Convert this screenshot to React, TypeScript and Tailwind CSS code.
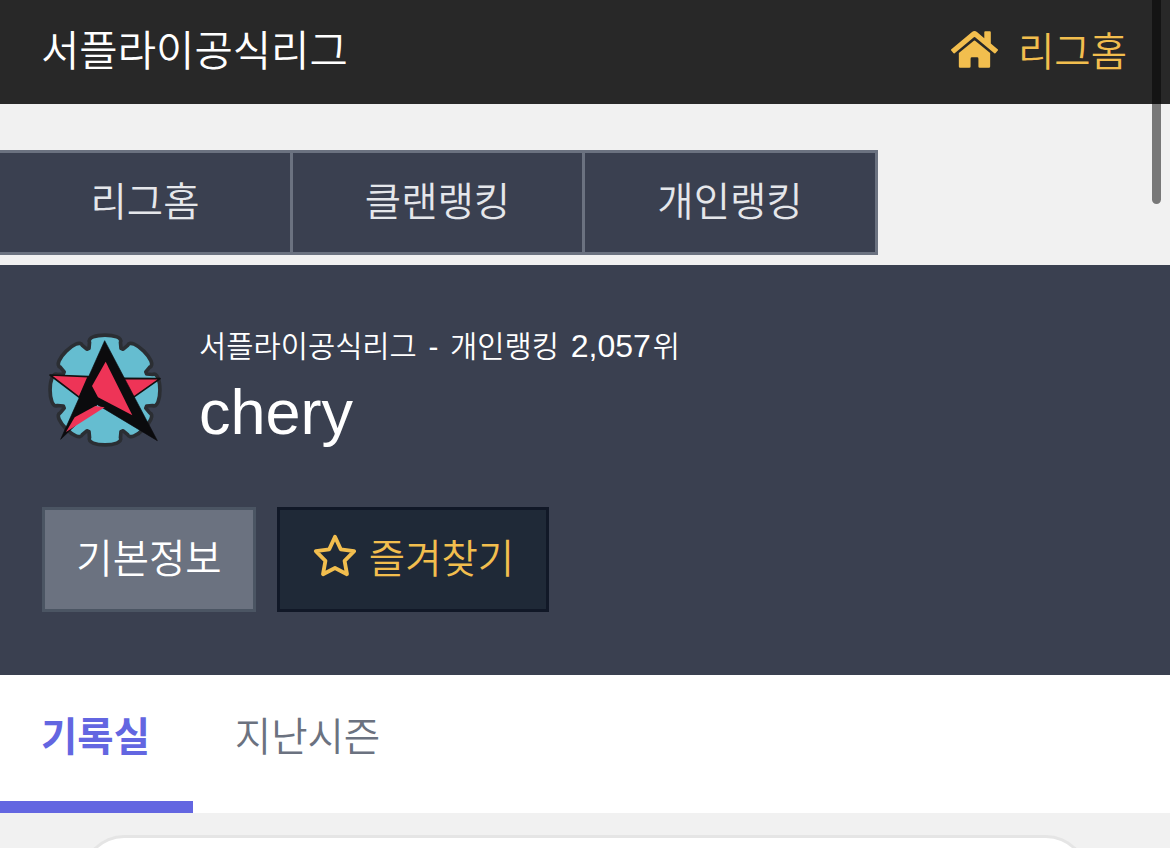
import { FaHome } from "react-icons/fa";

const KR = "font-['Noto_Sans_CJK_KR',sans-serif]";

// outline of the eight lobed gear behind the star
function gearPath() {
  const pt = (deg: number, r: number) => {
    const a = ((deg - 90) * Math.PI) / 180;
    return `${(r * Math.cos(a)).toFixed(1)},${(r * Math.sin(a)).toFixed(1)}`;
  };
  let d = "";
  for (let i = 0; i < 8; i++) {
    const t = i * 45;
    d += `${i === 0 ? "M" : "L"}${pt(t - 18, 150)} C${pt(t - 19, 182)} ${pt(t + 19, 182)} ${pt(t + 18, 150)} L${pt(t + 21, 134)} L${pt(t + 24, 134)} `;
  }
  return d + "Z";
}

function ClanBadge() {
  return (
    <svg viewBox="75 60 360 360" className="w-[120px] h-[120px] shrink-0">
      <path d={gearPath()} transform="translate(255 240)" fill="#65bdd0" stroke="#2b2e33" strokeWidth="11" strokeLinejoin="round" />
      <polygon points="90,195 205,200 178,262" fill="#ee3457" stroke="#111" strokeWidth="5" strokeLinejoin="round" />
      <polygon points="300,205 420,206 340,262" fill="#ee3457" stroke="#111" strokeWidth="5" strokeLinejoin="round" />
      <polygon points="254,92 412,392 232,284 122,388" fill="#0b0b0d" stroke="#0b0b0d" strokeWidth="2" strokeLinejoin="round" />
      <polygon points="257,155 337,316 234,262 216,228" fill="#ee3457" />
      <polygon points="138,366 164,322 226,288 254,292" fill="#ee3457" />
    </svg>
  );
}

export default function App() {
  return (
    <div className={`relative h-[848px] overflow-hidden bg-[#f1f1f1] ${KR}`}>
      <header className="h-[104px] bg-[#282828] flex items-center justify-between pl-[41px] pr-[43px]">
        <span className="text-[41.7px] leading-none font-[350] text-white -mt-[6px]">서플라이공식리그</span>
        <span className="flex items-center gap-[20px] text-[39.5px] leading-none font-[350] text-[#f2be4e] -mt-[6px]">
          <FaHome className="w-[47px] h-[47px]" />
          리그홈
        </span>
      </header>

      <nav className="mt-[46px] flex w-[878px] h-[105px] border-[3px] border-l-0 border-[#6b7280] bg-[#3a4050] text-[39.5px] font-[350] text-[#e5e7eb]">
        <a className="w-[293px] pb-[7px] flex items-center justify-center border-r-[3px] border-[#6b7280]">리그홈</a>
        <a className="w-[292px] pb-[7px] flex items-center justify-center border-r-[3px] border-[#6b7280]">클랜랭킹</a>
        <a className="flex-1 pb-[7px] flex items-center justify-center">개인랭킹</a>
      </nav>

      <section className="mt-[10px] h-[410px] bg-[#3a4050] pl-[45px] pt-[65px]">
        <div className="flex items-start gap-[34px]">
          <ClanBadge />
          <div className="text-white">
            <p className="text-[29.6px] leading-[34px] font-[350] -mt-[1px] font-['Liberation_Sans','Noto_Sans_CJK_KR',sans-serif] [word-spacing:3.5px]">
              서플라이공식리그 - 개인랭킹 <span className="text-[32px]">2,057</span>
              <span className="ml-[2px]">위</span>
            </p>
            <p className="text-[63px] leading-[70px] mt-[13px] font-['Liberation_Sans',sans-serif]">chery</p>
          </div>
        </div>
        <div className="-ml-[3px] mt-[57px] flex gap-[21px] text-[39.5px] font-[350]">
          <button className="w-[214px] h-[105px] pb-[7px] bg-[#6b7280] border-[3px] border-[#4b5563] text-white">기본정보</button>
          <button className="w-[272px] h-[105px] pb-[7px] flex items-center justify-center gap-[11px] bg-[#1f2937] border-[3px] border-[#111827] text-[#f2be4e]">
            <svg viewBox="0 0 48 48" className="w-[46px] h-[46px]" fill="none" stroke="currentColor" strokeWidth="4" strokeLinejoin="round">
              <path d="M24 4 L30 17 L44 19 L34 29 L36.5 43 L24 36.5 L11.5 43 L14 29 L4 19 L18 17 Z" />
            </svg>
            즐겨찾기
          </button>
        </div>
      </section>

      <div className="h-[138px] bg-white flex text-[39.5px]">
        <a className="w-[193px] flex items-center justify-center pb-[8px] pr-[2px] border-b-[12px] border-[#6366e1] font-semibold text-[#6366e1]">기록실</a>
        <a className="w-[229px] flex items-center justify-center pb-[20px] font-[350] text-[#6b7280]">지난시즌</a>
      </div>

      <div className="mx-[82px] mt-[22px] h-[60px] bg-white border-[3px] border-b-0 border-[#e5e5e5] rounded-t-[42px]" />

      <div className="absolute top-0 left-[1152px] w-[9px] h-[204px] rounded-b-full bg-black/50" />
    </div>
  );
}
